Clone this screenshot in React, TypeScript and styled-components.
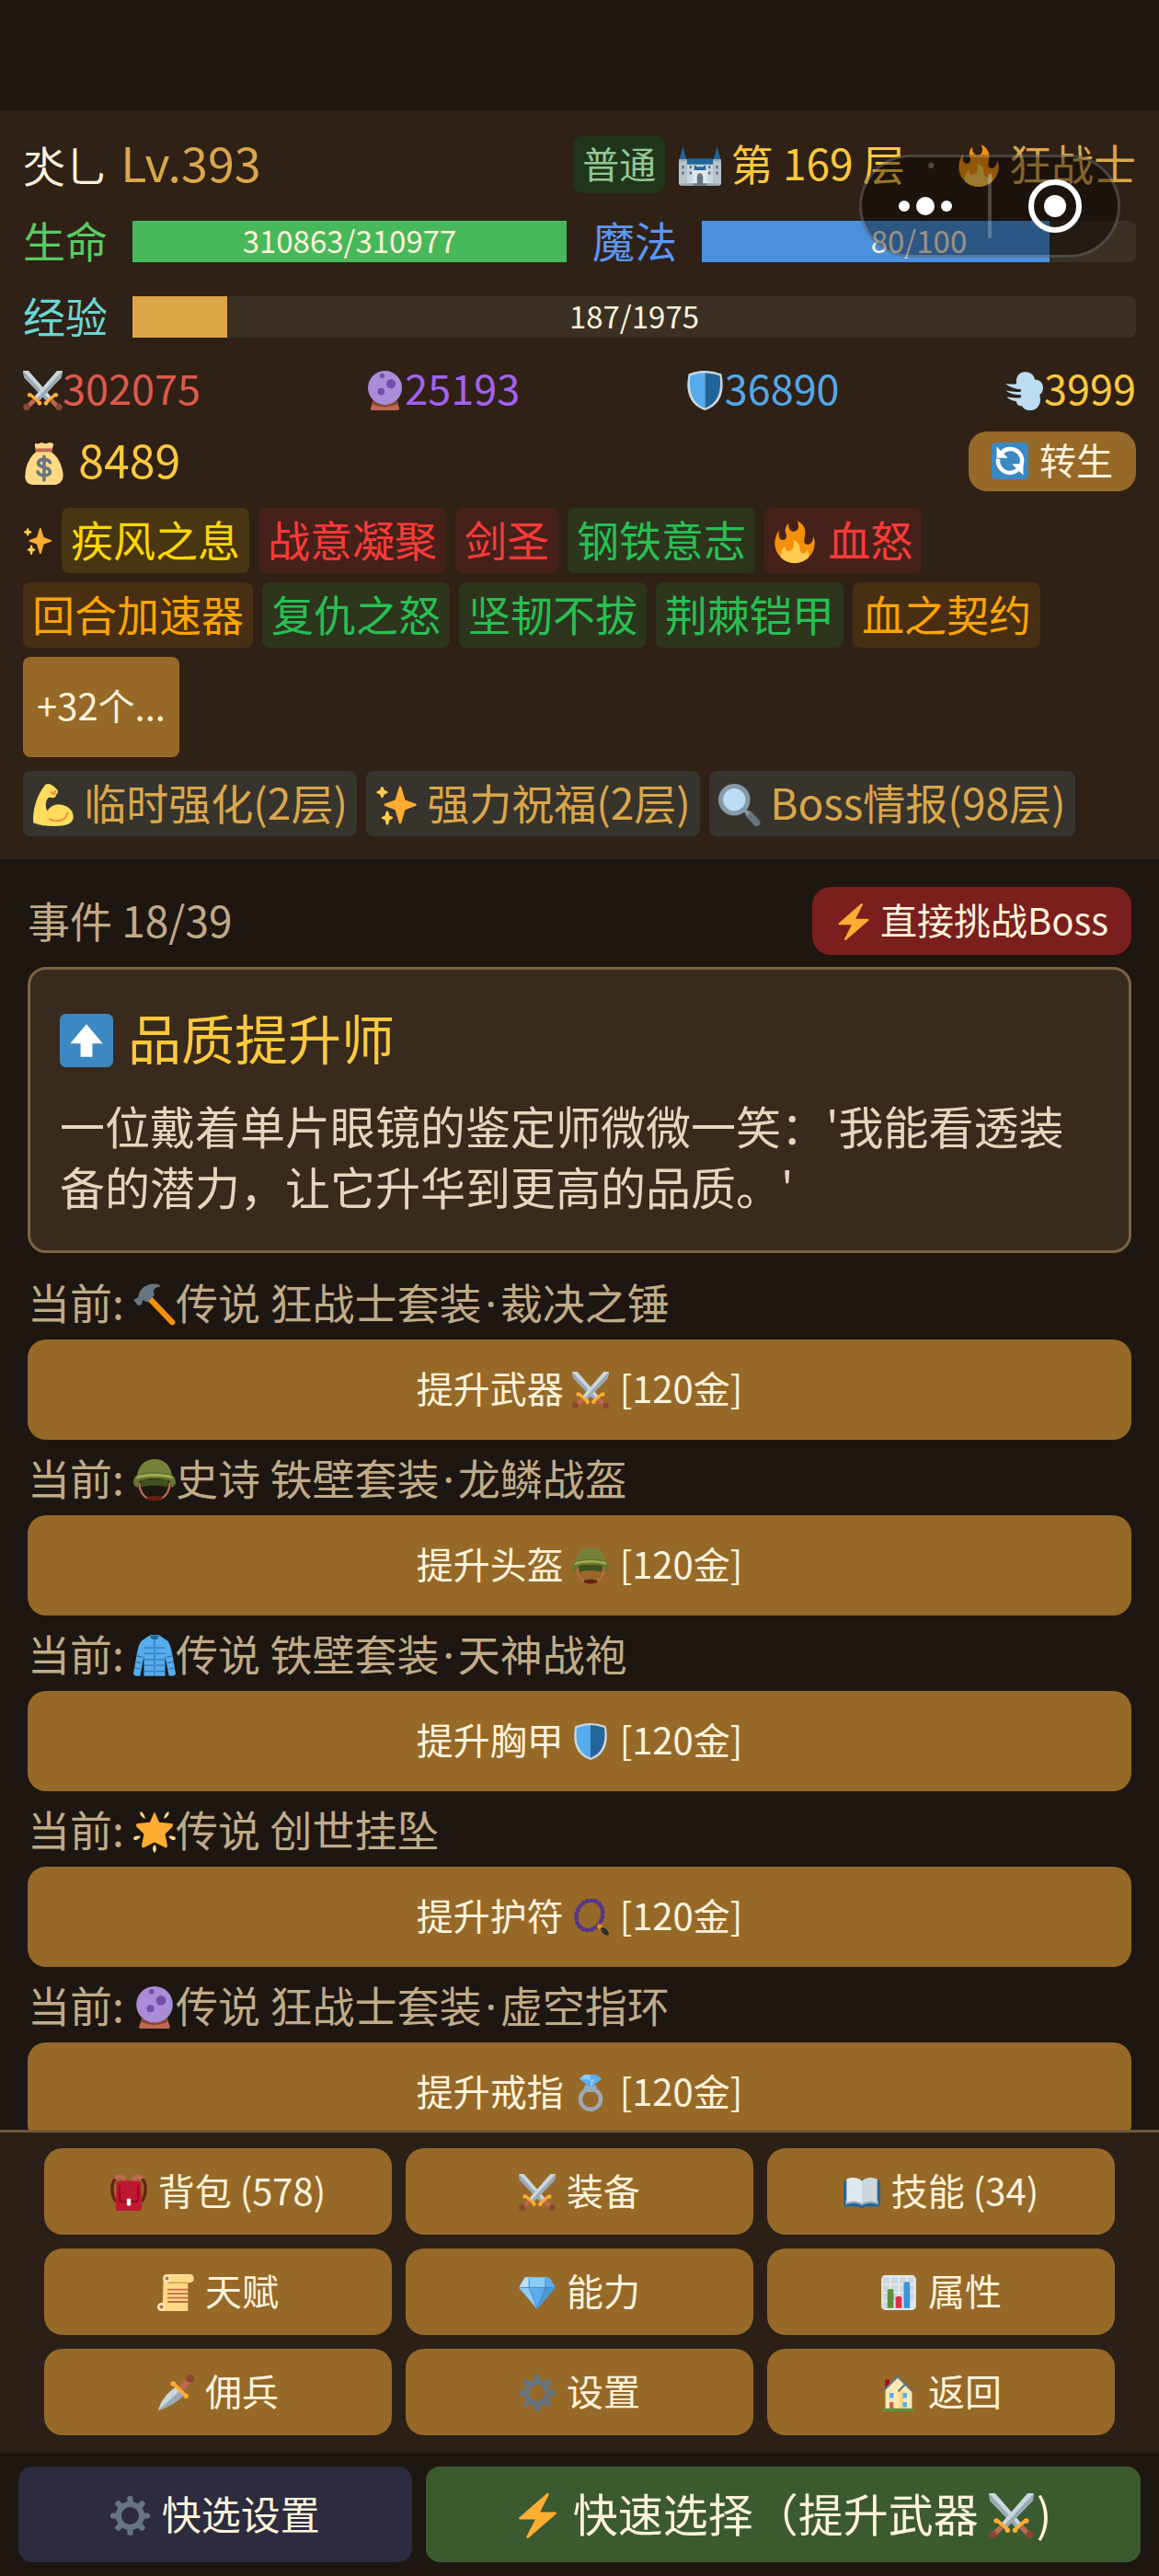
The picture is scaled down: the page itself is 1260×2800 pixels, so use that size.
import React from 'react';
import styled, { createGlobalStyle } from 'styled-components';

const GlobalStyle = createGlobalStyle`
  * { box-sizing: border-box; }
  html { background: #1e1611; }
  body {
    margin: 0;
    font-family: "Noto Sans CJK SC", "Noto Sans", sans-serif;
    color: #fff3dc;
  }
  button { font-family: inherit; color: inherit; border: 0; margin: 0; cursor: pointer; }
  h1, h2, p, ul { margin: 0; padding: 0; font-weight: 400; }
  ul { list-style: none; }
`;

/* ---------- icons, drawn on a 36 x 36 grid ---------- */

const Glyph = styled.svg<{ $size?: number; $spaced?: boolean }>`
  width: ${(p) => (p.$size ? `${p.$size}px` : '1em')};
  height: ${(p) => (p.$size ? `${p.$size}px` : '1em')};
  margin-right: ${(p) => (p.$spaced ? 3 : 0)}px;
  flex: none;
  vertical-align: -0.14em;
`;

const drawings = {
  castle: (
    <>
      <path fill="#CCD6DD" d="M7 16h22v19H7z" />
      <path fill="#226699" d="M3.500 2 6.600 13H.4zM32.500 2l3.100 11h-6.200zM7 12h22v5H7z" />
      <path fill="#B8C5CD" d="M0 13h7v22H2c-1 0-2-1-2-2zM29 13h7v20c0 1-1 2-2 2h-5z" />
      <path fill="#99AAB5" d="M0 12.500h7v2H0zM29 12.500h7v2h-7zM2 33h32v2H2z" />
      <path fill="#E1E8ED" d="M12 19h12v16H12z" />
      <path fill="#226699" d="M13 18h2v1h6v-1h2v4H13z" />
      <path fill="#66757F" d="M2.500 18h2v2.500h-2zM31.500 18h2v2.500h-2zM2.500 23h2v2.500h-2zM31.500 23h2v2.500h-2zM9 18h2v2.500H9zM25 18h2v2.500h-2zM9 23h2v2.500H9zM25 23h2v2.500h-2z" />
      <path fill="#66757F" d="M15.500 33v-5.500a2.500 3 0 0 1 5 0V33zM12 33h12v2H12z" />
    </>
  ),
  fire: (
    <>
      <path fill="#F4900C" d="M35 19c0-2.062-.367-4.039-1.040-5.868-.46 5.389-3.333 8.157-6.335 6.868-2.812-1.208-.917-5.917-.777-8.164.236-3.809-.012-8.169-6.931-11.794 2.875 5.500.333 8.917-2.333 9.125-2.958.231-5.667-2.542-4.667-7.042-3.238 2.386-3.332 6.402-2.333 9 1.042 2.708-.042 4.958-2.583 5.208-2.840.28-4.418-3.041-2.963-8.333C2.520 10.965 1 14.805 1 19c0 9.389 7.611 17 17 17s17-7.611 17-17z" />
      <path fill="#FFCC4D" d="M28.394 23.999c.148 3.084-2.561 4.293-4.019 3.709-2.106-.843-1.541-2.291-2.083-5.291s-2.625-5.083-5.708-6c2.250 6.333-1.247 8.667-3.080 9.084-1.872.426-3.753-.001-3.968-4.007C7.352 23.668 6 26.676 6 30c0 .368.023.73.055 1.090C9.125 34.124 13.342 36 18 36s8.875-1.876 11.945-4.910c.032-.36.055-.722.055-1.090 0-2.187-.584-4.236-1.606-6.001z" />
    </>
  ),
  swords: (
    <>
      <path fill="#CCD6DD" d="M0 0h5l21 24-4 4L1 6z" />
      <path fill="#99AAB5" d="M1 6 22 28l2-2L0 0z" />
      <path fill="#CCD6DD" d="M36 0h-5L10 24l4 4L35 6z" />
      <path fill="#99AAB5" d="M36 0 12 26l2 2L35 6z" />
      <path stroke="#BF6952" strokeWidth="4" d="m26 27 6 6M10 27l-6 6" />
      <path stroke="#FFAC33" strokeWidth="2.800" strokeLinecap="round" fill="none" d="m21 29 8-7M15 29l-8-7" />
      <circle fill="#FFAC33" cx="21" cy="29.500" r="2" />
      <circle fill="#FFAC33" cx="30" cy="22" r="2" />
      <circle fill="#FFAC33" cx="15" cy="29.500" r="2" />
      <circle fill="#FFAC33" cx="6" cy="22" r="2" />
      <circle fill="#8A4633" cx="32.800" cy="33" r="3" />
      <circle fill="#8A4633" cx="3.200" cy="33" r="3" />
    </>
  ),
  orb: (
    <>
      <path fill="#BF6952" d="M7 28h22l2 6c.4 1.400-.4 2-1.500 2h-23C5.400 36 4.600 35.400 5 34z" />
      <path fill="#8A4633" d="M7 27h22l1 3c-8 4-16 4-24 0z" />
      <circle fill="#AA8DD8" cx="18" cy="15.500" r="15.500" />
      <ellipse fill="#744EAA" cx="15.500" cy="4.500" rx="2.200" ry="2.200" />
      <circle fill="#744EAA" cx="23.500" cy="12" r="4.200" />
      <circle fill="#744EAA" cx="14.500" cy="19" r="3.200" />
    </>
  ),
  shield: (
    <>
      <path fill="#CCD6DD" d="M33 3c-7-3-15-3-15-3S10 0 3 3C0 18 3 31 18 36 33 31 36 18 33 3z" />
      <path fill="#55ACEE" d="M18 33.900C6.500 29.800 2.700 18.700 4.600 4.600 11 2 18 2 18 2z" />
      <path fill="#226699" d="M18 33.900V2s7 0 13.400 2.600C33.300 18.700 29.500 29.800 18 33.900z" />
    </>
  ),
  dash: (
    <>
      <path fill="#BDDDF4" d="M1 12c4 0 7 .5 10 0-1-6 2-11 8-11 5 0 8 3 8.500 7 5 0 8.500 4 7.500 9-.5 3-2 4-3 5 2 7-1 13-7 14-4 .5-8-1-9-4-4 0-5-2-5-4-4-1-7-2-9-4 4 0 9 1 13 .5V22C10 22 5 21 1 18c5 1 10 1.500 14 1v-2C10 17 5 15 1 12z" />
    </>
  ),
  money: (
    <>
      <path fill="#FFD983" d="M10 2c0-2 2-1 3-1s2-1 3-1 2 1 3 1 3-1 3-1 4 0 4 2l-2 6c6 4 9 11 10 18 1 5-2 10-8 10H9c-6 0-8-5-7-9 0-7 4-15 9-19z" />
      <path fill="#BF6952" d="M11 5h14v3H11z" />
      <path fill="none" stroke="#67757F" strokeWidth="2.800" strokeLinecap="round" d="M23 17c-1-3-9-4-10 0-1 5 10 3 10 8 0 4-9 4-10.500 0M18 12v20" />
    </>
  ),
  refresh: (
    <>
      <rect width="36" height="36" rx="4" fill="#3B88C3" />
      <path fill="none" stroke="#FFF" strokeWidth="4" d="M9 11a11.500 11.500 0 0 1 20 11M27 25A11.500 11.500 0 0 1 6.500 16" />
      <path fill="#FFF" d="M5 4v11h11zM31 32V21H20z" />
    </>
  ),
  sparkles: (
    <>
      <path fill="#FFAC33" d="M34.347 16.893l-8.899-3.294-3.323-10.891c-.128-.42-.517-.708-.956-.708-.439 0-.828.288-.956.708l-3.322 10.891-8.900 3.294c-.393.146-.653.519-.653.938 0 .418.26.793.653.938l8.895 3.293 3.324 11.223c.126.424.516.715.959.715.442 0 .833-.291.959-.716l3.324-11.223 8.896-3.293c.391-.144.652-.518.652-.937 0-.418-.261-.792-.653-.938z" />
      <path fill="#FFCC4D" d="M14.347 27.894l-2.314-.856-.9-3.300c-.118-.436-.513-.738-.964-.738-.451 0-.846.302-.965.737l-.9 3.300-2.313.856c-.393.146-.653.52-.653.938 0 .418.26.793.653.938l2.301.853.907 3.622c.112.444.511.756.97.756.459 0 .858-.312.97-.757l.907-3.622 2.301-.853c.393-.144.653-.519.653-.937 0-.418-.26-.793-.653-.937zM10.009 6.231l-2.364-.875-.876-2.365c-.145-.393-.519-.653-.938-.653-.418 0-.792.26-.938.653l-.875 2.365-2.365.875c-.393.146-.653.52-.653.938 0 .418.26.793.653.938l2.365.875.875 2.365c.146.393.52.653.938.653.418 0 .792-.26.938-.653l.875-2.365 2.365-.875c.393-.146.653-.52.653-.938 0-.418-.26-.792-.653-.938z" />
    </>
  ),
  muscle: (
    <>
      <path fill="#FFDC5D" d="M14 0c2 0 7 4 8 6 0 2-1 3-2 3 1 2-1 3-3 3-3-1-4 0-5 3-1 3 0 7 1 8 3-5 8-6 13-5 5 1 9 5 9 10 0 6-6 8-16 8-7 0-13-1-18-3-1-10 3-24 10-32 1-1 2-1 3-1z" />
      <path fill="none" stroke="#EF9645" strokeWidth="1.800" strokeLinecap="round" d="M15 30c5 3 13 2 15-5M16 7c1 1 3 1 4-1M17 8l3 1" />
    </>
  ),
  search: (
    <>
      <path stroke="#66757F" strokeWidth="6" strokeLinecap="round" d="m26 26 6.500 7" />
      <path stroke="#8899A6" strokeWidth="3" d="m22 22 4 4" />
      <circle cx="13.500" cy="13.500" r="11.500" fill="#BBDDF5" stroke="#8899A6" strokeWidth="4" />
    </>
  ),
  bolt: (
    <path fill="#FFAC33" d="M32.938 15.651C32.792 15.260 32.418 15 32 15H19.925L26.890 1.458c.219-.426.106-.947-.271-1.243C26.437.071 26.218 0 26 0c-.233 0-.466.082-.653.243L18 6.588 3.347 19.243c-.316.273-.43.714-.284 1.105S3.582 21 4 21h12.075L9.110 34.542c-.219.426-.106.947.271 1.243.182.144.401.215.619.215.233 0 .466-.082.653-.243L18 29.412l14.653-12.655c.317-.273.43-.714.285-1.106z" />
  ),
  up: (
    <>
      <rect width="36" height="36" rx="4" fill="#3B88C3" />
      <path fill="#FFF" d="M14 29h8v-9h7L18 7 7 20h7z" />
    </>
  ),
  hammer: (
    <>
      <path stroke="#F4900C" strokeWidth="5" strokeLinecap="round" d="m13 12 20 21" />
      <path fill="#66757F" d="M22 1C14-1 7 3 5 8l-1 4-4 2 4 5 3-1 1-4 4 2 6-6-1-3c1-3 3-4 6-4z" />
    </>
  ),
  helmet: (
    <>
      <path fill="#3E5220" d="M6 17h24l-1 7c-6-2-16-2-22 0z" />
      <path fill="none" stroke="#BF6952" strokeWidth="1.800" d="M5 20c0 8 4 12 8 14M31 20c0 8-4 12-8 14" />
      <path fill="#662113" d="M12 32c4-1 8-1 12 0l1 2c-4 2-10 2-14 0z" />
      <path fill="#77803A" d="M3 15C4 5 10 0 18 0s14 5 15 15z" />
      <path fill="#66752F" d="M0 20c0-4 2-6 4-7 9-3 19-3 28 0 2 1 4 3 4 7 0 2-2 4-4 4 0-3-1-5-2-6-8-2-16-2-24 0-1 1-2 3-2 6-2 0-4-2-4-4z" />
      <path fill="#A3AA55" d="M2 17c1-2 1-2 2-3 9-2 19-2 28 0 1 1 1 1 2 3-10-3-22-3-32 0z" />
    </>
  ),
  coat: (
    <>
      <path fill="#55ACEE" d="M13 1c3-2 7-2 10 0l6 4c2 2 3 6 4 11l3 17c0 2-6 3-6 1l-3-16v17H9V18L6 34c0 2-6 1-6-1l3-17c1-5 2-9 4-11z" />
      <path fill="none" stroke="#269" strokeWidth="1" opacity=".7" d="M18 4v31M9 11h8M19 11h8M9 16h8M19 16h8M9 21h8M19 21h8M9 26h8M19 26h8M9 31h8M19 31h8M3 18l5 1M2 23l5 1M1 28l5 1M33 18l-5 1M34 23l-5 1M35 28l-5 1" />
      <path fill="#226699" d="M14 1c3-1 5-1 8 0l-2 3h-4z" />
    </>
  ),
  star: (
    <>
      <path fill="#FFAC33" d="m18 1 4 9 10 1c2 0 2 2 1 3l-6 6 2 10c0 2-2 2-3 1l-8-4-8 4c-1 1-3 1-3-1l2-10-6-6c-1-1-1-3 1-3l10-1z" />
      <path fill="#FFD983" d="M6 1c2 0 4 4 4 6-3-1-5-4-4-6zM30 1c-2 0-4 4-4 6 3-1 5-4 4-6zM0 24c0-2 4-3 6-2-1 3-5 4-6 2zM36 24c0-2-4-3-6-2 1 3 5 4 6 2zM18 29c2 2 2 5 0 7-2-2-2-5 0-7z" />
    </>
  ),
  beads: (
    <>
      <ellipse cx="17" cy="16" rx="12.500" ry="15" transform="rotate(25 17 16)" fill="none" stroke="#553788" strokeWidth="4.500" strokeLinecap="round" strokeDasharray=".1 4.200" />
      <ellipse cx="17" cy="16" rx="12.500" ry="15" transform="rotate(25 17 16)" fill="none" stroke="#553788" strokeWidth="2.500" />
      <circle cx="27" cy="27" r="2.500" fill="#F4900C" />
      <path fill="#292F33" d="M28 28c4-1 8 3 8 7-4 2-8-2-8-7z" />
    </>
  ),
  ring: (
    <>
      <circle cx="18" cy="24" r="10" fill="none" stroke="#9AAAB4" strokeWidth="4" />
      <path fill="#9AAAB4" d="m12 11 3-1h6l3 1v6H12z" />
      <path fill="#5DADEC" d="m7 4 5-4h12l5 4-11 9z" />
      <path fill="#8CCAF7" d="m7 4 5-4h6v5zM18 5l4 0-4 8z" />
    </>
  ),
  backpack: (
    <>
      <path fill="none" stroke="#662113" strokeWidth="3" d="M6 4C0 8 1 20 5 27M30 4c6 4 5 16 1 23" />
      <path fill="none" stroke="#BF6952" strokeWidth="4" d="M5 5c4-5 8-3 9 4M31 5c-4-5-8-3-9 4" />
      <path fill="#BE1931" d="M6 8c0-2 24-2 24 0l1 25c0 2-1 3-3 3H8c-2 0-3-1-3-3z" />
      <path fill="none" stroke="#A0041E" strokeWidth="2" d="M9 11v13c0 3 1 3 3 3h12c2 0 3 0 3-3V11" />
      <rect x="16" y="24" width="4" height="7" rx="1" fill="#FFF" />
    </>
  ),
  book: (
    <>
      <path fill="#226699" d="M0 9c0-2 1-3 3-3h30c2 0 3 1 3 3v19c0 3-1 4-3 4H21l-3 2-3-2H3c-2 0-3-1-3-4z" />
      <path fill="#99AAB5" d="M2 26h32v4c-6-2-12-2-16 1-4-3-10-3-16-1z" />
      <path fill="#E1E8ED" d="M3 5c5-2 11-2 15 2v22c-4-3-10-3-15-1z" />
      <path fill="#CCD6DD" d="M33 5c-5-2-11-2-15 2v22c4-3 10-3 15-1z" />
    </>
  ),
  scroll: (
    <>
      <path fill="#FFD983" d="M6 3h24v33H5z" />
      <path fill="#FFE8B6" d="M10 0h22c5 0 5 8 0 8H10z" />
      <path fill="#FFD983" d="M10 1h22c4 0 4 6 0 6H10z" />
      <path fill="#E39F3D" d="M10 7.500h20v1.500H10z" />
      <circle cx="9.500" cy="4" r="4" fill="#FFE8B6" />
      <circle cx="9.500" cy="4" r="1.800" fill="#C1694F" />
      <circle cx="4" cy="32" r="4" fill="#FFE8B6" />
      <circle cx="4" cy="32" r="1.800" fill="#C1694F" />
      <path stroke="#C1694F" strokeWidth="1.600" d="M10 15h20M10 19h20M10 23h20M10 27h20" />
    </>
  ),
  gem: (
    <>
      <path fill="#5DADEC" d="M0 13 6 3h24l6 10-18 21z" />
      <path fill="#BDDDF4" d="M0 13 6 3l4 0v10z" />
      <path fill="#8CCAF7" d="M10 3h16v10H10zM0 13h10l8 21z" />
      <path fill="#4289C1" d="M26 13h10L18 34z" opacity=".6" />
      <path fill="none" stroke="#4289C1" strokeWidth=".8" d="M0 13h36M10 4v9l8 20 8-20V4" />
    </>
  ),
  chart: (
    <>
      <rect x="1" y="1" width="34" height="34" rx="4" fill="#E1E8ED" />
      <path fill="#CCD6DD" d="M3 3h6v6H3zM11 3h6v6h-6zM19 3h6v6h-6zM27 3h6v6h-6zM3 11h6v6H3zM11 11h6v6h-6zM19 11h6v6h-6zM27 11h6v6h-6zM3 19h6v6H3zM11 19h6v6h-6zM19 19h6v6h-6zM27 19h6v6h-6zM3 27h6v6H3z" />
      <path fill="#5C913B" d="M7 16c0-2 6-2 6 0v17H7z" />
      <path fill="#DD2E44" d="M15 23c0-2 6-2 6 0v10h-6z" />
      <path fill="#3B94D9" d="M23 9c0-2 6-2 6 0v24h-6z" />
    </>
  ),
  dagger: (
    <>
      <path fill="#CCD6DD" d="m18 12 8 8C18 28 10 32 1 35 3 26 9 19 18 12z" />
      <path fill="#99AAB5" d="m22 16 4 4C18 28 10 32 1 35z" />
      <path stroke="#BF6952" strokeWidth="5.500" d="M23 14 32 5" />
      <path stroke="#FFAC33" strokeWidth="3.400" strokeLinecap="round" d="m16 9 12 12" />
      <circle cx="15.500" cy="9" r="2.500" fill="#FFAC33" />
      <circle cx="28" cy="21" r="2.500" fill="#FFAC33" />
      <circle cx="32" cy="4" r="4" fill="#8A4633" />
    </>
  ),
  gear: (
    <>
      <circle cx="18" cy="18" r="10.500" fill="none" stroke="#66757F" strokeWidth="5" />
      {[0, 45, 90, 135, 180, 225, 270, 315].map((a) => (
        <path key={a} transform={`rotate(${a} 18 18)`} fill="#66757F" d="M15 7l.6-6c.2-1.300 4.600-1.300 4.800 0L21 7z" />
      ))}
    </>
  ),
  house: (
    <>
      <path fill="#A0041E" d="M5 5h4v9H5z" />
      <path fill="#FFE8B6" d="M5 14 17 2l14 14v18H5z" />
      <path fill="#FFD983" d="M18 15l4-4 1 23h-5z" />
      <path fill="none" stroke="#66757F" strokeWidth="2" strokeLinecap="round" d="M3 16 17 2l14 14M18 16l6-6" />
      <path fill="#55ACEE" d="M9 18h4v5H9zM22 18h4v5h-4zM22 27h4v5h-4z" />
      <path fill="#C1694F" d="M9 27h4v7H9z" />
      <rect x="2" y="33" width="31" height="3" rx="1.500" fill="#5C913B" />
    </>
  ),
};

type IconName = keyof typeof drawings;

const Icon = ({ name, size, spaced }: { name: IconName; size?: number; spaced?: boolean }) => (
  <Glyph viewBox="0 0 36 36" $size={size} $spaced={spaced} aria-hidden="true">
    {drawings[name]}
  </Glyph>
);

/* ---------- layout ---------- */

const Screen = styled.div`
  display: flex;
  flex-direction: column;
  height: 100vh;
  padding-top: 120px;
  background: #1e1611;
`;

const StatusPanel = styled.header`
  position: relative;
  flex: none;
  display: flex;
  flex-direction: column;
  gap: 15px;
  padding: 28px 25px 25px;
  background: #2f2116;
  font-size: 46px;
`;

const SpreadRow = styled.div<{ $height: number }>`
  display: flex;
  align-items: center;
  justify-content: space-between;
  min-height: ${(p) => p.$height}px;
  line-height: 50px;
`;

const Hero = styled.h1`
  padding-bottom: 4px;
  font-size: 46px;
  white-space: pre;
`;

const Level = styled.span`
  margin-left: 4px;
  font-size: 52px;
  color: #dba64a;
`;

const Place = styled.div`
  display: flex;
  align-items: center;
  color: #ffc93c;
`;

const Mode = styled.span`
  margin-right: 15px;
  padding: 0 10px 4px;
  border-radius: 10px;
  background: #20351b;
  color: #93c795;
  font-size: 40px;
  line-height: 58px;
`;

const PlaceText = styled.span`
  padding-bottom: 4px;
  white-space: pre;
`;

const Job = styled.span`
  color: #dba64a;
`;

const MidDot = styled.span<{ $faded?: boolean }>`
  margin: 0 ${(p) => (p.$faded ? 0 : 4)}px;
  font-family: "Noto Sans", sans-serif;
  line-height: 1;
  ${(p) => p.$faded && 'color: #8b7d6b;'}
`;

const Vitals = styled.div`
  display: grid;
  grid-template-columns: 1fr 1fr;
  gap: 8px 28px;
`;

const Vital = styled.div<{ $wide?: boolean; $tint: string }>`
  grid-column: ${(p) => (p.$wide ? '1 / -1' : 'auto')};
  display: flex;
  align-items: center;
  gap: 27px;
  color: ${(p) => p.$tint};
`;

const VitalName = styled.span`
  padding-bottom: 4px;
  line-height: 70px;
`;

const Track = styled.div`
  position: relative;
  flex: 1;
  height: 45px;
  border-radius: 8px;
  background: #3a3024;
`;

const Fill = styled.div<{ $tint: string }>`
  height: 100%;
  background: ${(p) => p.$tint};
`;

const Reading = styled.span`
  position: absolute;
  inset: 0;
  text-align: center;
  color: #fff3dc;
  font-size: 33px;
  line-height: 43px;
`;

const Stat = styled.span<{ $tint: string }>`
  padding-bottom: 4px;
  color: ${(p) => p.$tint};
  font-size: 45px;
`;

const Gold = styled.span`
  padding-bottom: 2px;
  color: #ffc93c;
  font-size: 50px;
`;

const Button = styled.button`
  border-radius: 20px;
  background: #966928;
  font-size: 40px;
  text-align: center;
  white-space: pre;
`;

const RebirthButton = styled(Button)`
  padding: 0 25px 4px;
  line-height: 61px;
`;

const ChallengeButton = styled(Button)`
  padding: 0 25px 4px;
  background: #7a1e1e;
  line-height: 70px;
`;

const Chips = styled.ul`
  display: flex;
  flex-wrap: wrap;
  align-items: center;
  gap: 10px;
`;

const tones = {
  yellow: ['#ffd700', '#483512'],
  red: ['#ff3b38', '#46211a'],
  green: ['#28c052', '#2d351d'],
  orange: ['#ffa500', '#482f13'],
  buff: ['#dba64a', '#36342d'],
} as const;

const Chip = styled.li<{ $tone: keyof typeof tones }>`
  padding: 0 10px 4px;
  border-radius: 8px;
  color: ${(p) => tones[p.$tone][0]};
  background: ${(p) => tones[p.$tone][1]};
  line-height: 67px;
  white-space: pre;
`;

const ChipMark = styled.li`
  display: flex;
`;

const MoreButton = styled(Button)`
  display: block;
  padding: 0 15px 4px;
  border-radius: 8px;
  line-height: 105px;
`;

const Capsule = styled.div`
  position: absolute;
  top: 48px;
  right: 42px;
  width: 284px;
  height: 112px;
  display: flex;
  align-items: center;
  border: 3px solid rgba(255, 255, 255, 0.2);
  border-radius: 56px;
  background: rgba(0, 0, 0, 0.4);
`;

const CapsuleButton = styled.button`
  flex: 1;
  height: 100%;
  display: flex;
  align-items: center;
  justify-content: center;
  padding: 0;
  background: none;
`;

const CapsuleRule = styled.span`
  width: 4px;
  height: 70px;
  background: rgba(255, 255, 255, 0.22);
`;

const Content = styled.main`
  flex: 1;
  min-height: 0;
  overflow: hidden;
  padding: 30px 30px 0;
`;

const EventHead = styled.div`
  display: flex;
  align-items: center;
  justify-content: space-between;
  margin-bottom: 13px;
  color: #fff3dc;
`;

const Progress = styled.span`
  padding-bottom: 4px;
  color: #bfab88;
  font-size: 46px;
`;

const Card = styled.section`
  padding: 32px;
  border: 3px solid #7a6445;
  border-radius: 20px;
  background: #382a1d;
`;

const CardTitle = styled.h2`
  margin-bottom: 22px;
  color: #ffc93c;
  font-size: 58px;
  line-height: 82px;
`;

const CardText = styled.p`
  padding-bottom: 5px;
  color: #e6d5bd;
  font-size: 49px;
  line-height: 66px;
`;

const Options = styled.ul`
  margin-top: 12px;
`;

const Current = styled.p`
  padding-bottom: 2px;
  color: #bfab88;
  font-size: 46px;
  line-height: 80px;
  white-space: pre;
`;

const UpgradeButton = styled(Button)`
  display: block;
  width: 100%;
  padding: 0 0 4px;
  line-height: 105px;
`;

const Menu = styled.nav`
  flex: none;
  display: grid;
  grid-template-columns: repeat(3, 1fr);
  gap: 15px;
  padding: 17px 48px 19px;
  border-top: 3px solid #6f5a3d;
  background: #2b2017;
`;

const MenuButton = styled(Button)`
  padding: 0 0 4px;
  line-height: 90px;
`;

const QuickBar = styled.footer`
  flex: none;
  display: grid;
  grid-template-columns: 428fr 777fr;
  gap: 15px;
  padding: 15px 20px;
`;

const QuickButton = styled(Button)<{ $main?: boolean }>`
  padding: 0 0 4px;
  border-radius: 15px;
  background: ${(p) => (p.$main ? '#3b5a30' : '#2c2b40')};
  font-size: ${(p) => (p.$main ? 49 : 43)}px;
  line-height: 100px;
`;

/* ---------- data ---------- */

const stats: { icon: IconName; value: number; tint: string }[] = [
  { icon: 'swords', value: 302075, tint: '#de5a4c' },
  { icon: 'orb', value: 25193, tint: '#a461f0' },
  { icon: 'shield', value: 36890, tint: '#55a8e6' },
  { icon: 'dash', value: 3999, tint: '#ffc93c' },
];

const talents: { text: string; tone: keyof typeof tones; icon?: IconName }[] = [
  { text: '疾风之息', tone: 'yellow' },
  { text: '战意凝聚', tone: 'red' },
  { text: '剑圣', tone: 'red' },
  { text: '钢铁意志', tone: 'green' },
  { text: ' 血怒', tone: 'red', icon: 'fire' },
  { text: '回合加速器', tone: 'orange' },
  { text: '复仇之怒', tone: 'green' },
  { text: '坚韧不拔', tone: 'green' },
  { text: '荆棘铠甲', tone: 'green' },
  { text: '血之契约', tone: 'orange' },
];

const buffs: { text: string; icon: IconName }[] = [
  { text: '临时强化(2层)', icon: 'muscle' },
  { text: '强力祝福(2层)', icon: 'sparkles' },
  { text: 'Boss情报(98层)', icon: 'search' },
];

const options: {
  icon: IconName;
  quality: string;
  set?: string;
  item: string;
  slot: string;
  slotIcon: IconName;
}[] = [
  { icon: 'hammer', quality: '传说', set: '狂战士套装', item: '裁决之锤', slot: '武器', slotIcon: 'swords' },
  { icon: 'helmet', quality: '史诗', set: '铁壁套装', item: '龙鳞战盔', slot: '头盔', slotIcon: 'helmet' },
  { icon: 'coat', quality: '传说', set: '铁壁套装', item: '天神战袍', slot: '胸甲', slotIcon: 'shield' },
  { icon: 'star', quality: '传说', item: '创世挂坠', slot: '护符', slotIcon: 'beads' },
  { icon: 'orb', quality: '传说', set: '狂战士套装', item: '虚空指环', slot: '戒指', slotIcon: 'ring' },
];

const menu: { icon: IconName; text: string }[] = [
  { icon: 'backpack', text: '背包 (578)' },
  { icon: 'swords', text: '装备' },
  { icon: 'book', text: '技能 (34)' },
  { icon: 'scroll', text: '天赋' },
  { icon: 'gem', text: '能力' },
  { icon: 'chart', text: '属性' },
  { icon: 'dagger', text: '佣兵' },
  { icon: 'gear', text: '设置' },
  { icon: 'house', text: '返回' },
];

const Bar = ({ value, max, tint }: { value: number; max: number; tint: string }) => (
  <Track>
    <Fill $tint={tint} style={{ width: `${(value / max) * 100}%` }} />
    <Reading>{`${value}/${max}`}</Reading>
  </Track>
);

export default function App() {
  return (
    <Screen>
      <GlobalStyle />
      <StatusPanel>
        <SpreadRow $height={62}>
          <Hero>
            氼乚 <Level>Lv.393</Level>
          </Hero>
          <Place>
            <Mode>普通</Mode>
            <PlaceText>
              <Icon name="castle" /> 第 169 层 <MidDot $faded> · </MidDot> <Icon name="fire" />{' '}
              <Job>狂战士</Job>
            </PlaceText>
          </Place>
        </SpreadRow>
        <Vitals>
          <Vital $tint="#58cc62">
            <VitalName>生命</VitalName>
            <Bar value={310863} max={310977} tint="#48b95b" />
          </Vital>
          <Vital $tint="#5b97f5">
            <VitalName>魔法</VitalName>
            <Bar value={80} max={100} tint="#4a90dd" />
          </Vital>
          <Vital $wide $tint="#6bd5d5">
            <VitalName>经验</VitalName>
            <Bar value={187} max={1975} tint="#dba647" />
          </Vital>
        </Vitals>
        <SpreadRow $height={54}>
          {stats.map((s) => (
            <Stat key={s.icon} $tint={s.tint}>
              <Icon name={s.icon} size={43} />
              {s.value}
            </Stat>
          ))}
        </SpreadRow>
        <SpreadRow $height={72}>
          <Gold>
            <Icon name="money" size={46} spaced /> 8489
          </Gold>
          <RebirthButton type="button">
            <Icon name="refresh" spaced /> 转生
          </RebirthButton>
        </SpreadRow>
        <Chips>
          <ChipMark>
            <Icon name="sparkles" size={32} />
          </ChipMark>
          {talents.map((t) => (
            <Chip key={t.text} $tone={t.tone}>
              {t.icon && <Icon name={t.icon} spaced />}
              {t.text}
            </Chip>
          ))}
          <li>
            <MoreButton type="button">+32个...</MoreButton>
          </li>
        </Chips>
        <Chips>
          {buffs.map((b) => (
            <Chip key={b.text} $tone="buff">
              <Icon name={b.icon} /> {b.text}
            </Chip>
          ))}
        </Chips>
        <Capsule>
          <CapsuleButton type="button" aria-label="更多">
            <svg width="60" height="24" viewBox="0 0 60 24" fill="#fff" aria-hidden="true">
              <circle cx="7" cy="12" r="6" />
              <circle cx="30" cy="12" r="10" />
              <circle cx="53" cy="12" r="6" />
            </svg>
          </CapsuleButton>
          <CapsuleRule />
          <CapsuleButton type="button" aria-label="关闭">
            <svg width="60" height="60" viewBox="0 0 60 60" aria-hidden="true">
              <circle cx="30" cy="30" r="26" fill="none" stroke="#fff" strokeWidth="6" />
              <circle cx="30" cy="30" r="12" fill="#fff" />
            </svg>
          </CapsuleButton>
        </Capsule>
      </StatusPanel>

      <Content>
        <EventHead>
          <Progress>事件 18/39</Progress>
          <ChallengeButton type="button">
            <Icon name="bolt" /> 直接挑战Boss
          </ChallengeButton>
        </EventHead>
        <Card>
          <CardTitle>
            <Icon name="up" spaced /> 品质提升师
          </CardTitle>
          <CardText>一位戴着单片眼镜的鉴定师微微一笑：'我能看透装备的潜力，让它升华到更高的品质。'</CardText>
        </Card>
        <Options>
          {options.map((o) => (
            <li key={o.slot}>
              <Current>
                当前: <Icon name={o.icon} />
                {o.quality} {o.set}
                {o.set && <MidDot>·</MidDot>}
                {o.item}
              </Current>
              <UpgradeButton type="button">
                提升{o.slot} <Icon name={o.slotIcon} spaced /> [120金]
              </UpgradeButton>
            </li>
          ))}
        </Options>
      </Content>

      <Menu>
        {menu.map((m) => (
          <MenuButton key={m.text} type="button">
            <Icon name={m.icon} spaced /> {m.text}
          </MenuButton>
        ))}
      </Menu>
      <QuickBar>
        <QuickButton type="button">
          <Icon name="gear" spaced /> 快选设置
        </QuickButton>
        <QuickButton type="button" $main>
          <Icon name="bolt" spaced /> 快速选择（提升武器 <Icon name="swords" spaced />)
        </QuickButton>
      </QuickBar>
    </Screen>
  );
}
